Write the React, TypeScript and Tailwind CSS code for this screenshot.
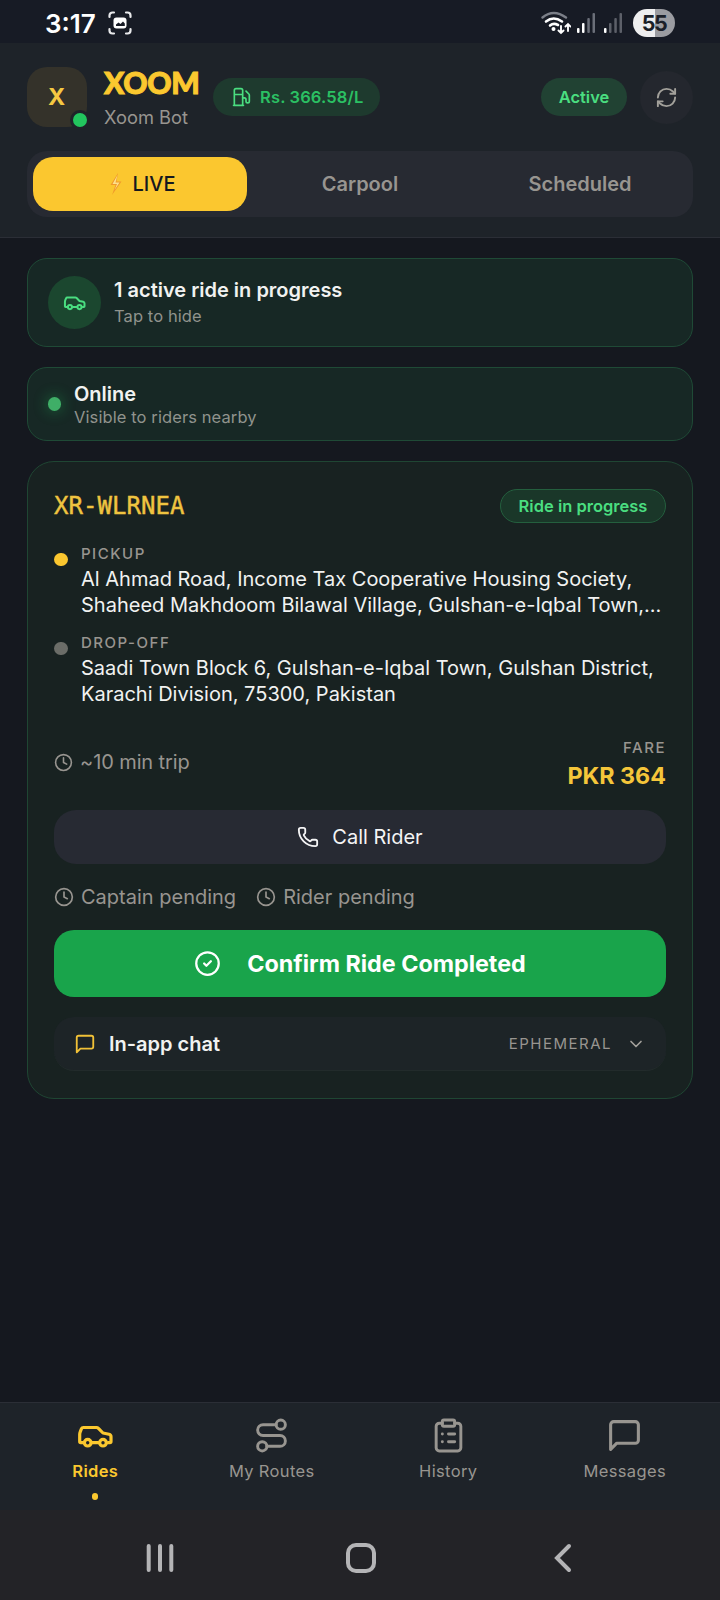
import React from "react";
import {
  ChevronDown,
  CircleCheck,
  ClipboardList,
  Clock,
  Phone,
  RefreshCw,
  Route,
} from "lucide-react";

const CarIcon = ({ className }: { className?: string }) => (
  <svg viewBox="0 0 36 24" fill="none" stroke="currentColor" strokeWidth="3.2" strokeLinecap="round" strokeLinejoin="round" className={className}>
    <path d="M6 17.7H3.800Q2.700 17.700 2.700 16.500V9.500Q2.700 8 3.400 6.300L4.500 3.700Q5 2.500 6.400 2.500H19.500Q20.600 2.500 21.400 3.300L26 8L32 9.200Q34 9.700 34 11.700V16.500Q34 17.700 32.900 17.700H31" />
    <path d="M15 17.7H21.500" />
    <circle cx="10.7" cy="17.7" r="3.3" />
    <circle cx="26" cy="17.7" r="3.3" />
  </svg>
);

const ChatIcon = ({ className }: { className?: string }) => (
  <svg viewBox="0 0 24 24" fill="none" stroke="currentColor" strokeWidth="2" strokeLinecap="round" strokeLinejoin="round" className={className}>
    <path d="M21 15a2 2 0 0 1-2 2H7l-4 4V5a2 2 0 0 1 2-2h14a2 2 0 0 1 2 2z" />
  </svg>
);

const FuelIcon = ({ className }: { className?: string }) => (
  <svg viewBox="0 0 24 24" fill="none" stroke="currentColor" strokeWidth="2" strokeLinecap="round" strokeLinejoin="round" className={className}>
    <path d="M3 22h12M4 9h10M14 22V4a2 2 0 0 0-2-2H6a2 2 0 0 0-2 2v18" />
    <path d="M14 13h2a2 2 0 0 1 2 2v2a2 2 0 0 0 4 0V9.83a2 2 0 0 0-.59-1.42L18 5" />
  </svg>
);

const StatusBar = () => (
  <div className="flex h-[43px] items-center justify-between bg-[#171b25] pl-[45px] pr-[45px] pt-[3px] text-white">
    <div className="flex items-center gap-[12px]">
      <span className="pt-[2px] text-[26px] font-semibold leading-none">3:17</span>
      <svg viewBox="0 0 24 24" className="size-6" fill="none" stroke="#e8e9eb" strokeWidth="2.2" strokeLinecap="round">
        <path d="M1.5 6V4.5a3 3 0 0 1 3-3H6M18 1.5h1.5a3 3 0 0 1 3 3V6M22.5 18v1.5a3 3 0 0 1-3 3H18M6 22.5H4.5a3 3 0 0 1-3-3V18" />
        <rect x="5.5" y="6.5" width="13" height="11" rx="3" fill="#fff" stroke="none" />
        <path d="M8 15v-1.5l2.5-2 2 1.5 2.5-2.5 1.8 2V15z" fill="#171b25" stroke="none" />
      </svg>
    </div>
    <div className="flex items-center">
      <svg viewBox="0 0 30 24" className="mr-[6px] h-6 w-[30px]" fill="none" strokeLinecap="round">
        <path d="M1.5 6.5Q12.5-2.5 25 6.5" stroke="#7b7f88" strokeWidth="2.4" />
        <path d="M5 10.5Q12.5 4.5 21 10.5M9 14.5Q12.5 11.5 17 14" stroke="#fff" strokeWidth="2.6" />
        <circle cx="12.5" cy="18" r="2" fill="#fff" />
        <path d="M20 15v7M17.5 19.5l2.5 2.5 2.5-2.5M27 20v-7M24.5 15.5l2.5-2.5 2.5 2.5" stroke="#fff" strokeWidth="1.9" />
      </svg>
      <svg viewBox="0 0 18 20" className="mr-[9px] h-5 w-[18px]">
        <rect x="0" y="15" width="2.5" height="5" rx="1" fill="#fff" />
        <rect x="5" y="10" width="2.5" height="10" rx="1" fill="#fff" />
        <rect x="10.3" y="5" width="2.5" height="15" rx="1" fill="#6b6f79" />
        <rect x="15.5" y="0" width="2.5" height="20" rx="1" fill="#6b6f79" />
      </svg>
      <svg viewBox="0 0 18 20" className="mr-[11px] h-5 w-[18px]">
        <rect x="0" y="15" width="2.5" height="5" rx="1" fill="#fff" />
        <rect x="5" y="10" width="2.5" height="10" rx="1" fill="#5d6069" />
        <rect x="10.3" y="5" width="2.5" height="15" rx="1" fill="#5d6069" />
        <rect x="15.5" y="0" width="2.5" height="20" rx="1" fill="#5d6069" />
      </svg>
      <div className="flex h-7 w-[42px] items-center justify-center rounded-full bg-linear-to-r from-[#eeeeef] from-53% to-[#9b9ca1] to-53% pt-px text-[21.5px] font-bold leading-none tracking-[-1.5px] text-[#1b1f28]">
        55
      </div>
    </div>
  </div>
);

const Header = () => (
  <header className="flex h-[195px] flex-col border-b border-[#2b2e36] bg-[#1e2329] px-[27px] pt-6">
    <div className="flex h-[60px] items-center">
      <div className="relative flex size-[60px] shrink-0 items-center justify-center rounded-[20px] bg-[#34322a] pr-px text-[23.3px] font-bold text-[#f5c842]">
        X
        <span className="absolute -bottom-[3px] -right-[3px] size-5 rounded-full border-3 border-[#1e2329] bg-[#22c55e]"></span>
      </div>
      <div className="ml-[17px] flex w-[97px] flex-col">
        <span className="font-[Lato,sans-serif] text-[30px] font-black leading-[32px] tracking-[-0.3px] text-[#fbc82f] [-webkit-text-stroke:1px_#fbc82f]">XOOM</span>
        <span className="-mb-px mt-[6px] whitespace-nowrap text-[18.3px] leading-[26px] text-[#989590]">Xoom Bot</span>
      </div>
      <div className="ml-[12px] flex h-[38px] w-[167px] items-center rounded-full bg-[#1e3a2e] pl-[18px] text-[#4ade80]">
        <FuelIcon className="size-5 shrink-0" />
        <span className="ml-[9px] whitespace-nowrap pt-px text-[16.5px] font-semibold tracking-[0.15px] text-[#2bc063]">Rs. 366.58/L</span>
      </div>
      <div className="ml-auto flex h-[38px] w-[86px] items-center justify-center rounded-full bg-[#214233] pt-px text-[16.5px] font-semibold text-[#4ade80]">
        Active
      </div>
      <button className="ml-[13px] flex size-[53px] items-center justify-center rounded-full bg-[#24272e] text-[#a3a19b]">
        <RefreshCw size={23} strokeWidth={2} />
      </button>
    </div>
    <div className="mt-6 flex h-[66px] rounded-[20px] bg-[#272a32] p-1.5 text-[20px] font-semibold text-[#989590]">
      <button className="flex w-[214px] items-center justify-center rounded-[20px] bg-[#fbc72f] pl-[5px] font-medium text-[#15181f]">
        <svg viewBox="0 0 12 22" className="mr-[11px] h-[22px] w-3">
          <path d="M8 0L0.5 12H5.5L2 22L11.5 8.5H6.5Z" fill="#f09a2b" />
          <path d="M7.5 2L2.5 11H7L4.5 17L9.5 9.5H5.5Z" fill="#fde08a" />
        </svg>
        LIVE
      </button>
      <button className="flex flex-1 items-center justify-center pl-1.5">Carpool</button>
      <button className="flex flex-1 items-center justify-center pl-1.5">Scheduled</button>
    </div>
  </header>
);

const stops = [
  {
    label: "PICKUP",
    dot: "bg-[#fbc72f]",
    lines: ["Al Ahmad Road, Income Tax Cooperative Housing Society,", "Shaheed Makhdoom Bilawal Village, Gulshan-e-Iqbal Town,..."],
  },
  {
    label: "DROP-OFF",
    dot: "bg-[#6b6d68]",
    lines: ["Saadi Town Block 6, Gulshan-e-Iqbal Town, Gulshan District,", "Karachi Division, 75300, Pakistan"],
  },
];

const RideCard = () => (
  <section className="mt-5 flex h-[638px] flex-col rounded-[27px] border border-[#1f4633] bg-[#182221] px-[26px] pt-[27px]">
    <div className="flex h-[34px] items-center justify-between">
      <span className="font-['DejaVu_Sans_Mono',monospace] text-[24px] tracking-[0.05px] text-[#efc440] [-webkit-text-stroke:0.4px_#efc440]">XR-WLRNEA</span>
      <span className="flex h-[34px] w-[166px] items-center justify-center rounded-full border border-[#245f3e] bg-[#1a3729] pt-px text-[16.5px] font-semibold text-[#4ade80]">
        Ride in progress
      </span>
    </div>
    <div className="mt-5 flex flex-col gap-[14px]">
      {stops.map((stop) => (
        <div key={stop.label} className="flex">
          <span className={`mt-[10px] h-[13px] w-[14px] shrink-0 rounded-full ${stop.dot}`}></span>
          <div className="ml-[13px] flex flex-col">
            <span className="text-[15px] font-medium leading-[22px] tracking-[1.5px] text-[#989590]">{stop.label}</span>
            <p className="mt-px text-[20px] leading-[26px] text-[#f1f2f1]">
              {stop.lines.map((line) => (
                <span key={line} className="block whitespace-nowrap">{line}</span>
              ))}
            </p>
          </div>
        </div>
      ))}
    </div>
    <div className="mt-[30px] flex h-[56px] items-center justify-between">
      <div className="flex items-center pb-[6px] text-[20px] text-[#989590]">
        <Clock size={19} strokeWidth={2} />
        <span className="ml-[7px] tracking-[-0.1px]">~10 min trip</span>
      </div>
      <div className="flex flex-col items-end">
        <span className="text-[15px] font-medium leading-[22px] tracking-[1.5px] text-[#989590]">FARE</span>
        <span className="text-[23.3px] font-bold leading-[34px] text-[#f5c63a]">PKR 364</span>
      </div>
    </div>
    <button className="mt-[17px] flex h-[54px] shrink-0 items-center justify-center rounded-[22px] bg-[#272a33] text-[20px] text-[#f4f4f5]">
      <Phone size={22} strokeWidth={2} />
      <span className="ml-[13px]">Call Rider</span>
    </button>
    <div className="mt-[17px] flex h-8 shrink-0 items-center text-[20px] text-[#989590]">
      <Clock size={20} strokeWidth={2} />
      <span className="ml-[7px]">Captain pending</span>
      <Clock size={20} strokeWidth={2} className="ml-5" />
      <span className="ml-[7px]">Rider pending</span>
    </div>
    <button className="mt-[17px] flex h-[67px] shrink-0 items-center justify-center rounded-[20px] bg-[#19a44b] text-[23.3px] font-bold text-white">
      <CircleCheck size={27} strokeWidth={2} />
      <span className="ml-[26px] pt-px">Confirm Ride Completed</span>
    </button>
    <div className="mt-5 flex h-[54px] shrink-0 items-center rounded-[20px] border-b border-[#222b2b] bg-[#1d2427] pl-5 pr-5">
      <ChatIcon className="size-[22px] text-[#f1c137]" />
      <span className="ml-[13px] text-[20px] font-semibold text-[#f1f2f1]">In-app chat</span>
      <span className="ml-auto pt-px text-[15px] tracking-[1.5px] text-[#989590]">EPHEMERAL</span>
      <ChevronDown size={20} strokeWidth={2} className="ml-[14px] text-[#a3a19b]" />
    </div>
  </section>
);

const BottomNav = () => (
  <nav className="grid h-[108px] shrink-0 grid-cols-4 border-t border-[#2b2e36] bg-[#1e2329] px-[7px] text-[16.5px] tracking-[0.35px] text-[#989590]">
    <div className="flex flex-col items-center pt-[13px] text-[#fbc82f]">
      <CarIcon className="mt-[9px] h-6 w-9" />
      <span className="mt-[11px] font-semibold leading-[22px]">Rides</span>
      <span className="mt-[11px] h-[7px] w-[6px] rounded-full bg-[#fbc82f]"></span>
    </div>
    <div className="flex flex-col items-center pt-[14px]">
      <Route size={37} strokeWidth={1.9} />
      <span className="mt-[6px] leading-[22px]">My Routes</span>
    </div>
    <div className="flex flex-col items-center pt-[14px]">
      <ClipboardList size={37} strokeWidth={1.9} />
      <span className="mt-[6px] leading-[22px]">History</span>
    </div>
    <div className="flex flex-col items-center pt-[14px]">
      <ChatIcon className="size-[37px]" />
      <span className="mt-[6px] leading-[22px]">Messages</span>
    </div>
  </nav>
);

const SystemNav = () => (
  <div className="flex h-[90px] shrink-0 items-center justify-between bg-[#232327] pl-[146px] pr-[148px] pt-[6px]">
    <svg viewBox="0 0 28 30" className="h-[30px] w-7" stroke="#b4b4b6" strokeWidth="4" strokeLinecap="round">
      <path d="M2.7 3v24M14 3v24M25.3 3v24" />
    </svg>
    <span className="mr-[7px] size-[30px] rounded-[10px] border-4 border-[#b4b4b6]"></span>
    <svg viewBox="0 0 18 30" className="h-[30px] w-[18px]" fill="none" stroke="#b4b4b6" strokeWidth="4" strokeLinecap="round">
      <path d="M15 3L3 15L15 27" />
    </svg>
  </div>
);

const App = () => {
  return (
    <div className="flex h-[1600px] w-[720px] flex-col overflow-hidden bg-[#15181f] font-[Inter,sans-serif]">
      <StatusBar />
      <Header />
      <main className="flex flex-1 flex-col px-[27px] pt-5">
        <section className="flex h-[89px] items-center rounded-[20px] border border-[#1f4a36] bg-[#172825] px-5">
          <div className="flex size-[53px] items-center justify-center rounded-full bg-[#1b472f] text-[#4ade80]">
            <CarIcon className="mt-[2px] h-[15px] w-[23px]" />
          </div>
          <div className="ml-[13px] flex flex-col pb-px">
            <span className="text-[20px] font-semibold leading-[28px] text-[#f1f2f1]">1 active ride in progress</span>
            <span className="text-[16.5px] leading-[24px] tracking-[0.1px] text-[#90938d]">Tap to hide</span>
          </div>
        </section>
        <section className="mt-5 flex h-[74px] items-center rounded-[20px] border border-[#1f4a36] bg-[#172825] px-5">
          <span className="h-[14px] w-[13px] rounded-full bg-[#3fae67] shadow-[0_0_14px_2px_rgba(34,197,94,0.3)]"></span>
          <div className="ml-[13px] flex flex-col pt-[2px]">
            <span className="text-[20px] font-semibold leading-[24px] text-[#f1f2f1]">Online</span>
            <span className="text-[16.5px] leading-[22px] tracking-[0.1px] text-[#90938d]">Visible to riders nearby</span>
          </div>
        </section>
        <RideCard />
      </main>
      <BottomNav />
      <SystemNav />
    </div>
  );
};

export default App;
